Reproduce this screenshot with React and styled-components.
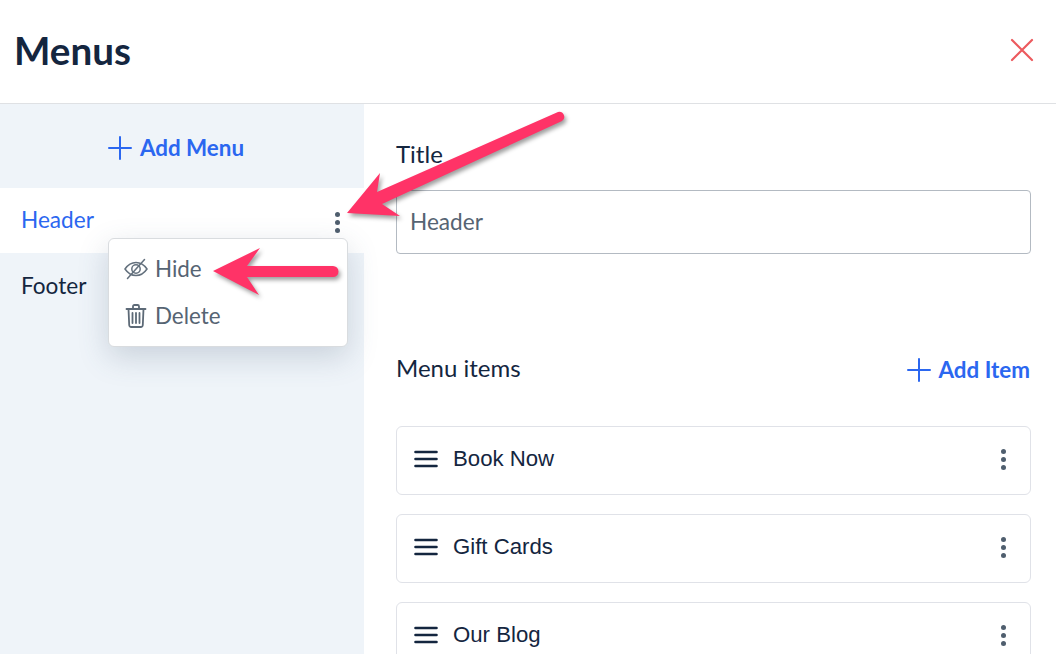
import React from 'react';
import styled, { createGlobalStyle } from 'styled-components';

const GlobalStyle = createGlobalStyle`
  html, body {
    margin: 0;
    padding: 0;
    background: #fff;
    overflow: hidden;
  }
  * {
    box-sizing: border-box;
  }
`;

const Page = styled.div`
  position: relative;
  width: 1056px;
  height: 654px;
  overflow: hidden;
  font-family: 'Lato', sans-serif;
  color: #14263f;
  display: flex;
  flex-direction: column;
`;

const Header = styled.header`
  height: 104px;
  flex: none;
  display: flex;
  align-items: center;
  justify-content: space-between;
  padding: 0 22px 3px 14px;
  border-bottom: 1px solid #dfe1e4;
`;

const Heading = styled.h1`
  margin: 0;
  font-size: 38.6px;
  font-weight: 700;
  line-height: 44px;
`;

const Close = styled.button`
  display: flex;
  padding: 0;
  border: none;
  background: none;
  color: #ec5a5e;
`;

const Body = styled.div`
  flex: 1;
  display: flex;
  min-height: 0;
`;

const Sidebar = styled.aside`
  width: 364px;
  flex: none;
  background: #eff4f9;
`;

const AddMenu = styled.div`
  height: 84px;
  display: flex;
  align-items: center;
  justify-content: center;
  padding: 4px 12px 0 0;
`;

const AddButton = styled.button`
  display: flex;
  align-items: center;
  gap: 8px;
  padding: 0;
  border: none;
  background: none;
  color: #2b67f0;
  font-family: inherit;
  font-size: 22.4px;
  font-weight: 700;
  line-height: 28px;
`;

const AddItem = styled(AddButton)`
  padding-top: 6px;
`;

const MenuRow = styled.div`
  position: relative;
  height: ${(p) => (p.$active ? '65px' : '66px')};
  display: flex;
  align-items: center;
  justify-content: space-between;
  padding: 0 24px 0 21px;
  background: ${(p) => (p.$active ? '#fff' : 'transparent')};
  color: ${(p) => (p.$active ? '#2b67f0' : '#14263f')};
  font-size: 22.6px;
`;

const RowLabel = styled.span`
  line-height: 28px;
  margin-top: ${(p) => (p.$active ? '-2px' : '0')};
`;

const Kebab = styled.span`
  display: flex;
  flex-direction: column;
  gap: 3px;
  margin-top: ${(p) => p.$shift || 0};

  i {
    width: 5px;
    height: 5px;
    border-radius: 50%;
    background: #4f5e6e;
  }
`;

const Dropdown = styled.div`
  position: absolute;
  left: 108px;
  top: 50px;
  width: 240px;
  height: 109px;
  padding: 6px 15px;
  background: #fff;
  border: 1px solid #d9dcdf;
  border-radius: 6px;
  box-shadow: 0 10px 30px rgba(70, 90, 120, 0.22);
  z-index: 2;
`;

const DropItem = styled.div`
  height: 47px;
  display: flex;
  align-items: center;
  gap: 7px;
  color: #566473;
  font-size: 22.4px;
`;

const DropIcon = styled.span`
  width: 24px;
  flex: none;
  display: flex;
  justify-content: center;
`;

const Main = styled.main`
  flex: 1;
  padding: 32px 25px 0 32px;
  min-width: 0;
`;

const Label = styled.div`
  font-size: 24px;
  line-height: 36px;
  height: 54px;
`;

const TitleInput = styled.input`
  display: block;
  width: 100%;
  height: 64px;
  padding: 0 13px 2px;
  border: 1px solid #b3bac2;
  border-radius: 4px;
  outline: none;
  background: #fff;
  font-family: inherit;
  font-size: 22.6px;
  color: #566473;
`;

const ItemsHead = styled.div`
  display: flex;
  align-items: center;
  justify-content: space-between;
  margin: 95px 1px 0 0;
  height: 36px;
  font-size: 24px;
`;

const ItemList = styled.div`
  display: flex;
  flex-direction: column;
  gap: 19px;
  margin-top: 41px;
`;

const Item = styled.div`
  flex: none;
  height: 69px;
  display: flex;
  align-items: center;
  padding: 0 24px 3px 17px;
  border: 1px solid #e0e2e8;
  border-radius: 6px;
  font-family: 'Liberation Sans', Arial, sans-serif;
  font-size: 22.2px;
`;

const ItemName = styled.span`
  flex: 1;
  margin-left: 15px;
`;

const Arrow = styled.svg`
  position: absolute;
  left: 0;
  top: 0;
  z-index: 5;
  pointer-events: none;
  filter: drop-shadow(2px 3px 2px rgba(0, 0, 0, 0.38));
`;

const Plus = () => (
  <svg width="24" height="24" viewBox="0 0 24 24" fill="none" stroke="currentColor" strokeWidth="2" strokeLinecap="round">
    <path d="M12 1v22M1 12h22" />
  </svg>
);

const Dots = ({ shift }) => (
  <Kebab $shift={shift}>
    <i />
    <i />
    <i />
  </Kebab>
);

const Burger = () => (
  <svg width="24" height="18" viewBox="0 0 24 18" fill="none" stroke="#14263f" strokeWidth="2.6" strokeLinecap="round">
    <path d="M1.5 2h21M1.5 9h21M1.5 16h21" />
  </svg>
);

const EyeOff = () => (
  <svg width="24" height="22" viewBox="0 0 24 22" fill="none" stroke="#63707d" strokeWidth="1.5" strokeLinecap="round">
    <path d="M1 11c3-4.4 6.700-6.500 11-6.500S20 6.600 23 11c-3 4.400-6.700 6.500-11 6.500S4 15.400 1 11z" />
    <circle cx="12" cy="11" r="4.200" />
    <path d="M3.500 20.500 20.500 1.500" />
  </svg>
);

const Trash = () => (
  <svg width="22" height="24" viewBox="0 0 22 24" fill="none" stroke="#5d6a77" strokeWidth="1.800" strokeLinecap="round" strokeLinejoin="round">
    <path d="M1.500 5h19M8 5V2.500C8 1.700 8.600 1 9.400 1h3.200c.8 0 1.400.7 1.400 1.500V5" />
    <path d="M3.500 5l.7 16c.1 1.200.9 2 2 2h9.600c1.100 0 1.900-.8 2-2l.7-16" />
    <path d="M7.500 9v10M11 9v10M14.500 9v10" />
  </svg>
);

const items = ['Book Now', 'Gift Cards', 'Our Blog'];

export default function App() {
  return (
    <Page>
      <GlobalStyle />
      <Header>
        <Heading>Menus</Heading>
        <Close aria-label="Close">
          <svg width="24" height="24" viewBox="0 0 24 24" fill="none" stroke="currentColor" strokeWidth="2.200" strokeLinecap="round">
            <path d="M2 2l20 20M22 2L2 22" />
          </svg>
        </Close>
      </Header>
      <Body>
        <Sidebar>
          <AddMenu>
            <AddButton>
              <Plus />
              Add Menu
            </AddButton>
          </AddMenu>
          <MenuRow $active>
            <RowLabel $active>Header</RowLabel>
            <Dots shift="4px" />
            <Dropdown>
              <DropItem>
                <DropIcon>
                  <EyeOff />
                </DropIcon>
                Hide
              </DropItem>
              <DropItem>
                <DropIcon>
                  <Trash />
                </DropIcon>
                Delete
              </DropItem>
            </Dropdown>
          </MenuRow>
          <MenuRow>
            <RowLabel>Footer</RowLabel>
          </MenuRow>
        </Sidebar>
        <Main>
          <Label>Title</Label>
          <TitleInput defaultValue="Header" />
          <ItemsHead>
            Menu items
            <AddItem>
              <Plus />
              Add Item
            </AddItem>
          </ItemsHead>
          <ItemList>
            {items.map((name) => (
              <Item key={name}>
                <Burger />
                <ItemName>{name}</ItemName>
                <Dots />
              </Item>
            ))}
          </ItemList>
        </Main>
      </Body>
      <Arrow width="1056" height="654" viewBox="0 0 1056 654">
        <path d="M380 173 347 213 400 216 382 204 562 121a5 5 0 0 0-4-9L377 192z" fill="#ff3367" />
        <path d="M213 271 260 248 247 266 333 266a5.500 5.500 0 0 1 0 11L247 277 259 295z" fill="#ff3367" />
      </Arrow>
    </Page>
  );
}
